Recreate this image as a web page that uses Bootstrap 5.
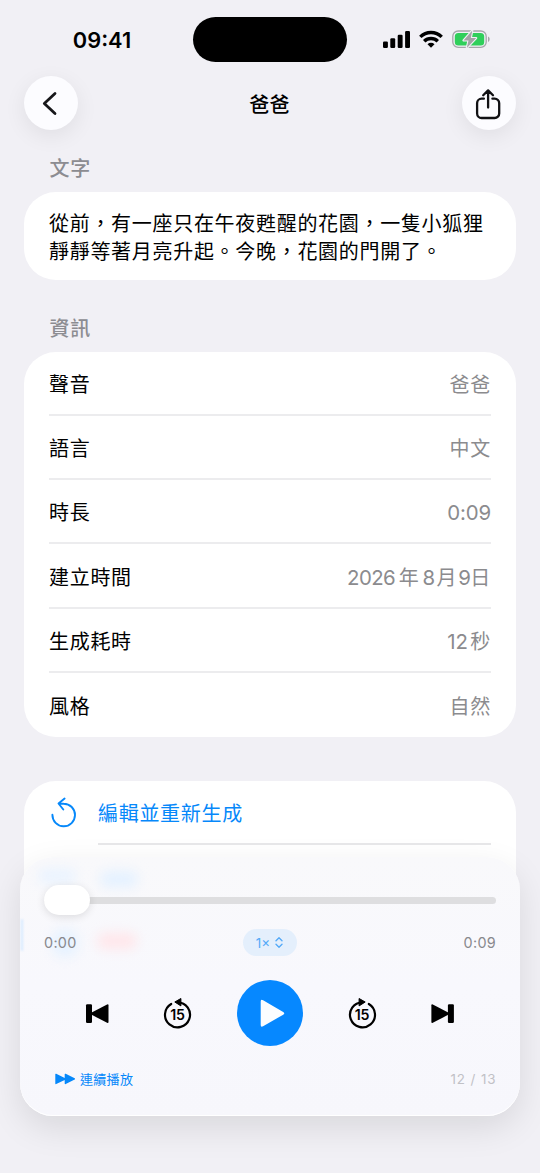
<!DOCTYPE html>
<html lang="zh-Hant">
<head>
<meta charset="utf-8">
<meta name="viewport" content="width=device-width, initial-scale=1">
<title>爸爸</title>
<link href="https://cdn.jsdelivr.net/npm/bootstrap@5.3.0/dist/css/bootstrap.min.css" rel="stylesheet">
<style>
:root{--accent:#0688fa;--canvas:#f1f0f5}
html,body{height:100%;overflow:hidden}
body{background:var(--canvas);color:#000;font-family:Inter,"Noto Sans CJK TC",sans-serif;font-size:20px;letter-spacing:.7px;line-height:28px}
.screen{width:540px;height:1173px;overflow:hidden;position:relative}
.statusbar{height:76px;padding-top:17px}
.clock{width:193px;padding-left:11px;padding-top:9px;font-size:21.8px;font-weight:600;letter-spacing:0}
.island{width:154px;height:45px;background:#000}
.indicators{width:193px;padding:12px 49px 0 0;height:45px}
.round-btn{width:54px;height:54px;background:#fcfcff;border:0;box-shadow:0 6px 22px rgba(0,0,0,.075)}
.topbar{height:54px;padding:0 24px}
.screen-title{font-size:20px;font-weight:500;letter-spacing:.2px;padding:3px 1px 0 0}
.content{padding:0 24.5px 0 24px}
.section-label{font-size:20px;line-height:28px;font-weight:500;color:#8c8c91;padding-left:25.5px;margin:25px 0 9px}
.panel{border:0;border-radius:32px;background:#fff;color:#000}
.story{padding:19px 20px 14px 25px;line-height:27.5px;height:88px}
.story + .section-label{margin-top:35px}
.info-row{height:64.16px;padding:4px 0 0;margin:0 24.5px 0 25px;border:0;border-bottom:2px solid #ececee;background:transparent;color:#000}
.info-row:last-child{border-bottom:0}
.val{color:#8b8b8e}
.num{font-size:20.4px;letter-spacing:-.1px}
.date .num{letter-spacing:-.55px}
.actions{margin-top:44px;height:130px;border-bottom-left-radius:0;border-bottom-right-radius:0}
.action-row{height:64px;margin:0 24.5px 0 25px;color:var(--accent)}
.action-text{height:64px;margin-left:21px;padding-top:4px;border-bottom:2px solid #e7e7e9}
.player{position:absolute;left:20px;top:857px;width:500px;height:259px;border-radius:33px;background:linear-gradient(#f9f9fb,#f8f8fd 50%,#f7f7fc);box-shadow:0 12px 34px rgba(0,0,0,.1),inset 0 -1px 0 #fff;padding:0 24px;overflow:hidden}
.glow{position:absolute;border-radius:12px;filter:blur(6px)}
.scrubber{height:30px;margin-top:28px;position:relative}
.groove{height:7px;border-radius:4px;background:#dedee0}
.knob{position:absolute;left:0;top:0;width:46px;height:30px;border-radius:15px;background:#fff;box-shadow:0 2px 9px rgba(0,0,0,.12)}
.times{height:28px;margin-top:13px;padding-top:1px;font-size:14.4px;letter-spacing:.3px;color:#88888d;position:relative}
.speed{width:54px;height:27px;background:#e4effc;color:#55aaf8;font-size:13.5px;letter-spacing:0}
.controls{height:66px;margin-top:24px;padding:0 41px;position:relative}
.skip-pair{gap:43px}
.play{width:66px;height:66px;background:#0688ff;border:0}
.footer-row{height:26px;margin-top:20px;font-size:13px;letter-spacing:.3px;color:var(--accent);padding-left:11px}
.counter{color:#c1c1c6;font-size:13.4px;letter-spacing:.9px;margin-right:-.5px}
svg{display:block;flex:none}
</style>
</head>
<body>
<main class="screen">
  <div class="statusbar d-flex">
    <div class="clock text-center">09:41</div>
    <div class="island rounded-pill"></div>
    <div class="indicators d-flex justify-content-end">
      <svg width="108" height="22" viewBox="0 0 108 22">
        <g><rect x="0" y="12.4" width="4.9" height="6.6" rx="1.2"/><rect x="7.3" y="9.2" width="4.9" height="9.8" rx="1.2"/><rect x="14.7" y="5.8" width="4.9" height="13.2" rx="1.2"/><rect x="22.1" y="2" width="4.9" height="17" rx="1.2"/></g>
        <g fill="none" stroke="#000" stroke-width="3.4"><path d="M37.3 7.9a15.2 15.2 0 0 1 21.4 0"/><path d="M41.2 12.3a9.6 9.6 0 0 1 13.6 0"/></g>
        <path d="M48 18.8l-3.5-3.5a5 5 0 0 1 7 0z"/>
        <rect x="69.8" y="2" width="33.4" height="16.4" rx="5.4" fill="none" stroke="#a6a6aa" stroke-width="1.3"/>
        <rect x="71.8" y="4" width="29.4" height="12.4" rx="3.5" fill="#30cf5b"/>
        <path d="M105 7.5c2.2.7 2.2 4.7 0 5.4z" fill="#a6a6aa"/>
        <path d="M89.3 1.5L80.5 11.4h5L83.8 19 93.2 9h-5.4z" fill="#a3a3a6" stroke="#f1f0f5" stroke-width="2.2" stroke-linejoin="round" paint-order="stroke"/>
      </svg>
    </div>
  </div>

  <header class="topbar d-flex justify-content-between align-items-center">
    <button class="round-btn rounded-circle p-0 d-flex align-items-center justify-content-center" aria-label="返回">
      <svg width="54" height="54" fill="none" stroke="#17171a" stroke-width="2.8" stroke-linecap="round" stroke-linejoin="round"><path d="M31 17.5L20.3 27.5 31 37.5"/></svg>
    </button>
    <h1 class="screen-title mb-0">爸爸</h1>
    <button class="round-btn rounded-circle p-0 d-flex align-items-center justify-content-center" aria-label="分享">
      <svg width="54" height="54" fill="none" stroke="#111114" stroke-width="2.3" stroke-linecap="round" stroke-linejoin="round"><path d="M21.9 22.7h-2.3a4.5 4.5 0 0 0-4.5 4.5v10.3a4.5 4.5 0 0 0 4.5 4.5h13.1a4.5 4.5 0 0 0 4.5-4.5V27.2a4.5 4.5 0 0 0-4.5-4.5h-2.3M26.1 31.5V14.6M21.2 19.3l4.9-4.9 4.9 4.9"/></svg>
    </button>
  </header>

  <div class="content">
    <h2 class="section-label">文字</h2>
    <section class="card panel story">從前，有一座只在午夜甦醒的花園，一隻小狐狸靜靜等著月亮升起。今晚，花園的門開了。</section>
    <h2 class="section-label">資訊</h2>
    <section class="card panel list-group">
      <div class="info-row list-group-item d-flex justify-content-between align-items-center"><span>聲音</span><span class="val">爸爸</span></div>
      <div class="info-row list-group-item d-flex justify-content-between align-items-center"><span>語言</span><span class="val">中文</span></div>
      <div class="info-row list-group-item d-flex justify-content-between align-items-center"><span>時長</span><span class="val num">0:09</span></div>
      <div class="info-row list-group-item d-flex justify-content-between align-items-center"><span>建立時間</span><span class="val date d-flex align-items-baseline"><span class="num">2026</span><span style="margin-left:3.5px">年</span><span class="num" style="margin-left:3px">8</span><span style="margin-left:2px">月</span><span class="num" style="margin-left:1px">9</span><span>日</span></span></div>
      <div class="info-row list-group-item d-flex justify-content-between align-items-center"><span>生成耗時</span><span class="val d-flex align-items-baseline"><span class="num">12</span><span style="margin-left:2.5px">秒</span></span></div>
      <div class="info-row list-group-item d-flex justify-content-between align-items-center"><span>風格</span><span class="val">自然</span></div>
    </section>
    <section class="card panel actions">
      <div class="action-row d-flex">
        <svg width="28" height="64" fill="none" stroke="#0688fa" stroke-width="1.9" stroke-linecap="round" stroke-linejoin="round"><path d="M3.4 33.8A11.3 11.3 0 1 0 14.7 22.7q-2.6-.1-5-.1M15.6 17.6L9.5 22.5l4.8 6"/></svg>
        <div class="action-text flex-grow-1 d-flex align-items-center">編輯並重新生成</div>
      </div>
    </section>
  </div>

  <section class="player">
    <div class="glow" style="left:18px;top:12px;width:38px;height:14px;background:#e9f3ff"></div>
    <div class="glow" style="left:80px;top:14px;width:38px;height:16px;background:#e4f1ff"></div>
    <div class="glow" style="left:32px;top:72px;width:26px;height:28px;background:#e6f2ff"></div>
    <div class="glow" style="left:77px;top:76px;width:40px;height:16px;background:#ffe6ea"></div>
    <div class="glow" style="left:1px;top:62px;width:2px;height:32px;background:#d5eaff;filter:blur(1px)"></div>
    <div class="scrubber d-flex align-items-center">
      <div class="groove w-100"></div><div class="knob"></div>
    </div>
    <div class="times d-flex justify-content-between align-items-center">
      <span>0:00</span>
      <span class="speed rounded-pill d-flex align-items-center justify-content-center gap-1">1×
        <svg width="10" height="13" fill="none" stroke="#55aaf8" stroke-width="1.4" stroke-linecap="round" stroke-linejoin="round"><path d="M2 4.8l3-3 3 3M2 8.2l3 3 3-3"/></svg>
      </span>
      <span>0:09</span>
    </div>
    <div class="controls d-flex align-items-center justify-content-between">
      <svg width="24" height="24"><rect x="1" y="3.2" width="6" height="18.8" rx="1.2"/><path d="M22.1 3.5q1.4-.7 1.4.8v16.6q0 1.5-1.4.8L6.2 13.6q-1.5-1 0-1.9z"/></svg>
      <div class="skip-pair d-flex align-items-center">
        <svg width="32" height="34" viewBox="0 0 32 34"><path d="M9.2 8A12.5 12.5 0 1 0 15.6 6.3" fill="none" stroke="#000" stroke-width="2.2" stroke-linecap="round"/><path d="M12.8 6l6.1-3.5v7.4z" stroke="#000" stroke-linejoin="round"/><text x="15.5" y="23.8" text-anchor="middle" font-family="Inter" font-weight="600" font-size="14.2" letter-spacing="-.2">15</text></svg>
        <button class="play rounded-circle p-0" aria-label="播放"><svg width="66" height="66"><path d="M23.7 21.5q0-2.6 2.4-1.2l20.1 11.6q2.2 1.4 0 2.8L26.1 46.3q-2.4 1.4-2.4-1.2z" fill="#fbfdff"/></svg></button>
        <svg width="32" height="34" viewBox="0 0 32 34"><path d="M22.8 8A12.5 12.5 0 1 1 16.4 6.3" fill="none" stroke="#000" stroke-width="2.2" stroke-linecap="round"/><path d="M19.2 6l-6.1-3.5v7.4z" stroke="#000" stroke-linejoin="round"/><text x="16" y="23.8" text-anchor="middle" font-family="Inter" font-weight="600" font-size="14.2" letter-spacing="-.2">15</text></svg>
      </div>
      <svg width="24" height="24"><rect x="16.9" y="3.2" width="6" height="18.8" rx="1.2"/><path d="M1.8 3.5Q.4 2.8.4 4.3v16.6q0 1.5 1.4.8l15.9-8.1q1.5-1 0-1.9z"/></svg>
    </div>
    <div class="footer-row d-flex align-items-center">
      <svg width="20" height="12" fill="#0688fa"><path d="M.3 1.3Q.3.3 1.2.8L9.7 5V1.3Q9.7.3 10.7.8l9 4.5q.8.6 0 1.2l-9 4.6q-1 .4-1-.6V6.9L1.2 11.1q-.9.4-.9-.6z"/></svg>
      <span style="margin-left:5px">連續播放</span>
      <span class="counter ms-auto">12 / 13</span>
    </div>
  </section>
</main>
<script src="https://cdn.jsdelivr.net/npm/bootstrap@5.3.0/dist/js/bootstrap.bundle.min.js"></script>
</body>
</html>
